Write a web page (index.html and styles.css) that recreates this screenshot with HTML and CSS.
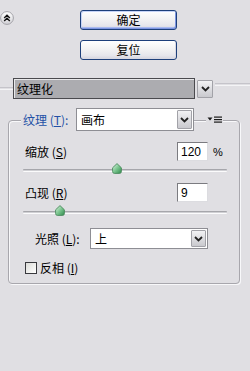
FILE: index.html
```html
<!DOCTYPE html>
<html lang="zh-CN">
<head>
<meta charset="utf-8">
<link rel="stylesheet" href="styles.css">
</head>
<body>
<div class="panel">
  <div class="top">
    <span class="collapse">
      <svg width="14" height="14" viewBox="0 0 14 14">
        <defs><linearGradient id="cg" x1="0" y1="0" x2="0" y2="1"><stop offset="0" stop-color="#ffffff"/><stop offset="1" stop-color="#d2d1d6"/></linearGradient></defs>
        <circle cx="7" cy="7" r="6.4" fill="url(#cg)" stroke="#a3a2a8"/>
        <path d="M4.2 7 L7 4.3 L9.8 7 M4.2 10 L7 7.3 L9.8 10" fill="none" stroke="#111" stroke-width="1.4"/>
      </svg>
    </span>
    <div class="actions">
      <button class="btn btn-default">确定</button>
      <button class="btn">复位</button>
    </div>
  </div>

  <div class="filter-row">
    <span class="rule rule-left"></span>
    <div class="combo-main">
      <span class="main-field">纹理化</span>
      <span class="drop drop-main">
        <svg width="9" height="6" viewBox="0 0 9 6"><path d="M1 1 L4.5 4.5 L8 1" fill="none" stroke="#222" stroke-width="1.8"/></svg>
      </span>
    </div>
    <span class="rule rule-right"></span>
  </div>

  <div class="group">
    <div class="group-head">
      <span class="legend">纹理 (<u>T</u>):</span>
      <div class="combo combo-texture">
        <span class="field">画布</span>
        <span class="drop">
          <svg width="9" height="6" viewBox="0 0 9 6"><path d="M1 1 L4.5 4.5 L8 1" fill="none" stroke="#222" stroke-width="1.8"/></svg>
        </span>
      </div>
      <span class="menu-icon">
        <svg width="15" height="7" viewBox="0 0 15 7">
          <path d="M0.5 1.5 H5.5 L3 4.5 Z" fill="#1a1a1a"/>
          <rect x="7" y="0.5" width="8" height="1.2" fill="#1a1a1a"/>
          <rect x="7" y="3" width="8" height="1.2" fill="#1a1a1a"/>
          <rect x="7" y="5.5" width="8" height="1.2" fill="#1a1a1a"/>
        </svg>
      </span>
    </div>

    <div class="row row-first">
      <span class="lbl">缩放 (<u>S</u>)</span>
      <span class="num">120</span>
      <span class="unit">%</span>
    </div>
    <div class="slider">
      <span class="track"></span>
      <span class="thumb" style="left: 89px">
        <svg width="10" height="11" viewBox="0 0 10 11">
          <defs><linearGradient id="tg1" x1="0" y1="0" x2="1" y2="1"><stop offset="0" stop-color="#e4f6e8"/><stop offset="0.5" stop-color="#7cc690"/><stop offset="1" stop-color="#2f8a4c"/></linearGradient></defs>
          <path d="M5 0.6 L9.4 4.8 V8.6 Q9.4 10.4 7.6 10.4 H2.4 Q0.6 10.4 0.6 8.6 V4.8 Z" fill="url(#tg1)" stroke="#4a8a5c" stroke-width="0.9"/>
        </svg>
      </span>
    </div>

    <div class="row row-second">
      <span class="lbl">凸现 (<u>R</u>)</span>
      <span class="num">9</span>
      <span class="unit"></span>
    </div>
    <div class="slider slider-second">
      <span class="track"></span>
      <span class="thumb" style="left: 32px">
        <svg width="10" height="11" viewBox="0 0 10 11">
          <defs><linearGradient id="tg2" x1="0" y1="0" x2="1" y2="1"><stop offset="0" stop-color="#e4f6e8"/><stop offset="0.5" stop-color="#7cc690"/><stop offset="1" stop-color="#2f8a4c"/></linearGradient></defs>
          <path d="M5 0.6 L9.4 4.8 V8.6 Q9.4 10.4 7.6 10.4 H2.4 Q0.6 10.4 0.6 8.6 V4.8 Z" fill="url(#tg2)" stroke="#4a8a5c" stroke-width="0.9"/>
        </svg>
      </span>
    </div>

    <div class="row row-light">
      <span class="lbl">光照 (<u>L</u>):</span>
      <div class="combo combo-light">
        <span class="field">上</span>
        <span class="drop">
          <svg width="9" height="6" viewBox="0 0 9 6"><path d="M1 1 L4.5 4.5 L8 1" fill="none" stroke="#222" stroke-width="1.8"/></svg>
        </span>
      </div>
    </div>

    <div class="row row-check">
      <span class="check"></span>
      <span class="lbl">反相 (<u>I</u>)</span>
    </div>
  </div>
</div>
</body>
</html>
```

FILE: styles.css
```css
html, body {
  margin: 0;
  padding: 0;
}
body {
  background: #e0dfe3;
  width: 250px;
  height: 371px;
  overflow: hidden;
  font-family: "Noto Sans CJK SC", "Liberation Sans", sans-serif;
  font-size: 12px;
  line-height: 14px;
  color: #000;
}
u {
  text-decoration: underline;
  text-underline-offset: 1px;
}
.panel {
  display: flex;
  flex-direction: column;
}

/* top buttons */
.top {
  display: flex;
  padding-top: 10px;
}
.collapse {
  display: block;
  width: 14px;
  height: 14px;
  margin: 1px 0 0 0;
}
.collapse svg { display: block; }
.actions {
  display: flex;
  flex-direction: column;
  gap: 10px;
  margin-left: 66px;
}
.btn {
  width: 97px;
  height: 20px;
  padding: 0;
  margin: 0;
  border: 1px solid #1d3f7a;
  border-radius: 3px;
  background: linear-gradient(#ffffff 0%, #f4f4f4 40%, #e6e6ec 80%, #d4d4de 100%);
  font-family: "Noto Sans CJK SC", sans-serif;
  font-size: 12px;
  line-height: 14px;
  color: #000;
  box-shadow: inset -1px -1px 0 #d8d8e2;
}
.btn-default {
  box-shadow: inset 1px 1px 0 #c6d4f6, inset -1px -1px 0 #7d95e0, inset 0 -2px 0 #a9baf0;
}

/* filter selector row */
.filter-row {
  display: flex;
  align-items: center;
  margin-top: 18px;
  height: 21px;
}
.rule {
  display: block;
  height: 1px;
  border-top: 1px solid #c5c4ca;
  border-bottom: 1px solid #f4f4f6;
}
.rule-left {
  width: 13px;
  margin-top: 0;
}
.rule-right {
  flex: 1;
  margin-left: 2px;
  margin-top: -8px;
}
.combo-main {
  display: flex;
  align-items: center;
}
.main-field {
  display: flex;
  align-items: center;
  box-sizing: border-box;
  width: 182px;
  height: 21px;
  padding-left: 3px;
  border: 1px solid #4a4a4e;
  box-shadow: inset 1px 1px 0 #e8e8ea;
  background: #acacb0;
}
.drop {
  display: flex;
  align-items: center;
  justify-content: center;
  box-sizing: border-box;
  width: 15px;
  border: 1px solid #a2a2a8;
  border-radius: 1px;
  background: linear-gradient(#f2f2f4, #c9c9ce);
}
.drop svg { display: block; }
.drop-main {
  height: 18px;
  margin-left: 2px;
  width: 16px;
}

/* group box */
.group {
  box-sizing: border-box;
  margin: 21px 0 0 8px;
  width: 232px;
  height: 164px;
  border: 1px solid #a8a7ad;
  border-radius: 4px;
  box-shadow: 1px 1px 0 #f8f8fa, inset 1px 1px 0 #f8f8fa;
  padding: 0 16px 0 16px;
}
.group-head {
  display: flex;
  align-items: center;
  height: 23px;
  margin: -13px 0 0 -4px;
}
.legend {
  box-sizing: border-box;
  width: 56px;
  padding-left: 2px;
  background: #e0dfe3;
  color: #2350a6;
  white-space: nowrap;
}
.combo {
  display: flex;
  align-items: stretch;
  box-sizing: border-box;
  border: 1px solid #8e8e94;
  background: #fff;
  padding: 1px;
}
.combo .field {
  flex: 1;
  display: flex;
  align-items: center;
  padding-left: 3px;
}
.combo-texture {
  width: 120px;
  height: 23px;
}
.menu-icon {
  display: flex;
  align-items: center;
  margin-left: 12px;
  padding: 0 1px;
  height: 9px;
  background: #e0dfe3;
}
.menu-icon svg { display: block; }

/* rows */
.row {
  display: flex;
  align-items: center;
  height: 21px;
}
.row-first { margin-top: 10px; }
.row-second { margin-top: 6px; }
.lbl {
  white-space: nowrap;
}
.num {
  box-sizing: border-box;
  margin-left: auto;
  width: 31px;
  height: 19px;
  padding: 2px 0 0 3px;
  border: 1px solid;
  border-color: #7b7b80 #dcdce0 #dcdce0 #7b7b80;
  background: #fff;
  font-family: "Liberation Sans", sans-serif;
  font-size: 12px;
  line-height: 14px;
}
.unit {
  width: 10px;
  margin-left: 5px;
  font-family: "Liberation Sans", sans-serif;
  font-size: 11px;
}

.slider {
  position: relative;
  height: 14px;
  width: 204px;
  margin-left: -2px;
}
.slider-second { margin-top: 1px; }
.track {
  display: block;
  position: relative;
  top: 7px;
  height: 1px;
  border-top: 1px solid #a6a6ab;
  border-bottom: 1px solid #fbfbfc;
  border-radius: 1px;
  background: #d0d0d4;
}
.thumb {
  position: absolute;
  top: 1px;
  width: 10px;
  height: 11px;
}
.thumb svg { display: block; }

.row-light {
  margin-top: 10px;
  padding-left: 10px;
}
.combo-light {
  width: 118px;
  height: 21px;
  margin-left: auto;
  margin-right: 15px;
}

.row-check {
  margin-top: 12px;
  height: 13px;
}
.check {
  box-sizing: border-box;
  width: 12px;
  height: 12px;
  margin-right: 3px;
  border: 1px solid #39393e;
  background: linear-gradient(135deg, #dcdcd8, #ffffff);
}
```
